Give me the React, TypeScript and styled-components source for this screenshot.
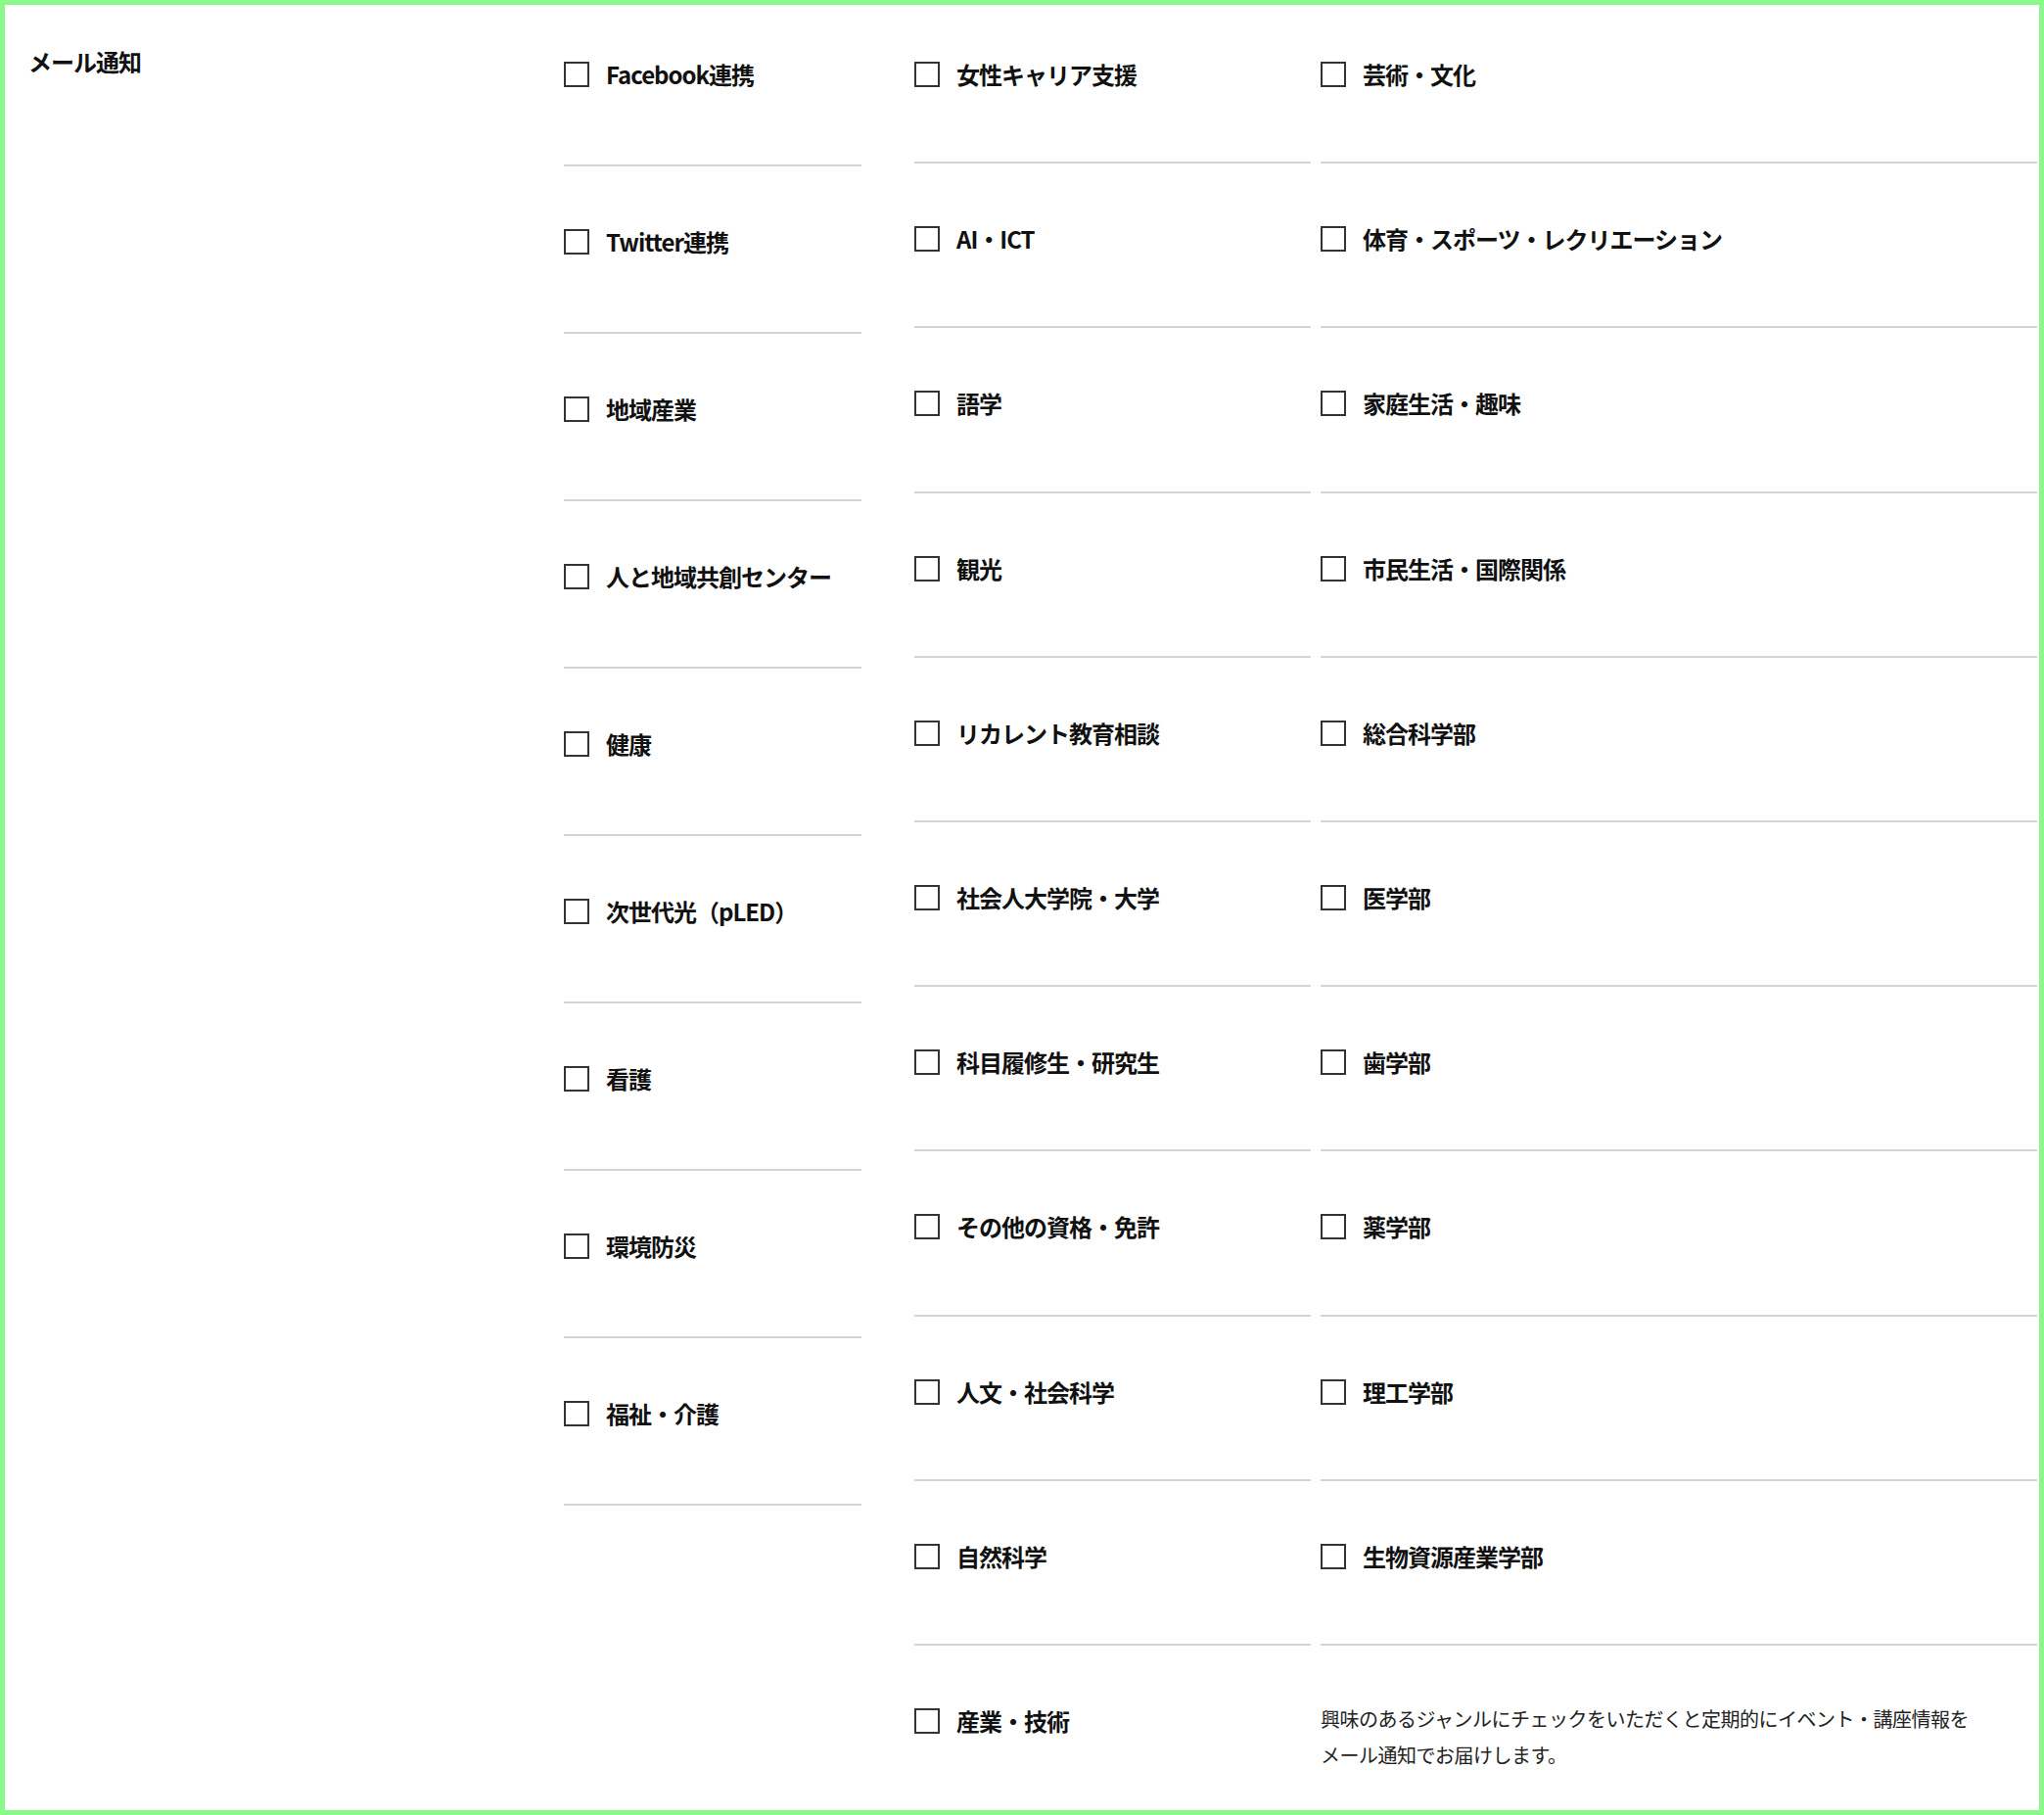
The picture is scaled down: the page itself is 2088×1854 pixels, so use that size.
import React from "react";
import styled, { createGlobalStyle } from "styled-components";

const Global = createGlobalStyle`
    body {
        margin: 0;
        background: #fff;
        font-family: "Noto Sans CJK JP", "Noto Sans", sans-serif;
        color: #111;
    }
`;

const Frame = styled.div`
    box-sizing: border-box;
    width: 2088px;
    height: 1854px;
    border: 5px solid #88f98a;
    display: flex;
    overflow: hidden;
`;

const Label = styled.div`
    width: 526px;
    padding: 40px 0 0 24px;
    font-size: 24px;
    font-weight: 700;
    letter-spacing: -1px;
`;

const Column = styled.div<{ w: number; ml: number }>`
    width: ${(p) => p.w}px;
    margin-left: ${(p) => p.ml}px;
    margin-top: -6px;
    display: flex;
    flex-direction: column;
`;

const Cell = styled.div<{ last?: boolean }>`
    box-sizing: border-box;
    height: 171px;
    padding-top: 64px;
    border-bottom: ${(p) => (p.last ? "none" : "2px solid #d4d4d4")};
`;

const Option = styled.label`
    display: flex;
    align-items: center;
    gap: 17px;
    font-size: 24px;
    font-weight: 700;
    letter-spacing: -1px;
    line-height: 26px;
`;

const Box = styled.span`
    box-sizing: border-box;
    width: 26px;
    height: 26px;
    border: 2px solid #333;
    flex-shrink: 0;
`;

const Note = styled.p`
    margin: -8px 0 0;
    font-size: 20px;
    line-height: 37px;
    color: #222;
    letter-spacing: -0.5px;
`;

const col1 = ["Facebook連携", "Twitter連携", "地域産業", "人と地域共創センター", "健康", "次世代光（pLED）", "看護", "環境防災", "福祉・介護"];
const col2 = ["女性キャリア支援", "AI・ICT", "語学", "観光", "リカレント教育相談", "社会人大学院・大学", "科目履修生・研究生", "その他の資格・免許", "人文・社会科学", "自然科学", "産業・技術"];
const col3 = ["芸術・文化", "体育・スポーツ・レクリエーション", "家庭生活・趣味", "市民生活・国際関係", "総合科学部", "医学部", "歯学部", "薬学部", "理工学部", "生物資源産業学部"];

const Item: React.FC<{ text: string; last?: boolean }> = ({ text, last }) => (
    <Cell last={last}>
        <Option>
            <Box />
            {text}
        </Option>
    </Cell>
);

export default function App() {
    return (
        <>
            <Global />
            <Frame>
                <Label>メール通知</Label>
                <Column w={304} ml={21}>
                    {col1.map((t) => <Item key={t} text={t} />)}
                </Column>
                <Column w={405} ml={54}>
                    {col2.map((t, i) => <Item key={t} text={t} last={i === col2.length - 1} />)}
                </Column>
                <Column w={732} ml={10}>
                    {col3.map((t) => <Item key={t} text={t} />)}
                    <Cell last>
                        <Note>
                            興味のあるジャンルにチェックをいただくと定期的にイベント・講座情報を
                            <br />
                            メール通知でお届けします。
                        </Note>
                    </Cell>
                </Column>
            </Frame>
        </>
    );
}
